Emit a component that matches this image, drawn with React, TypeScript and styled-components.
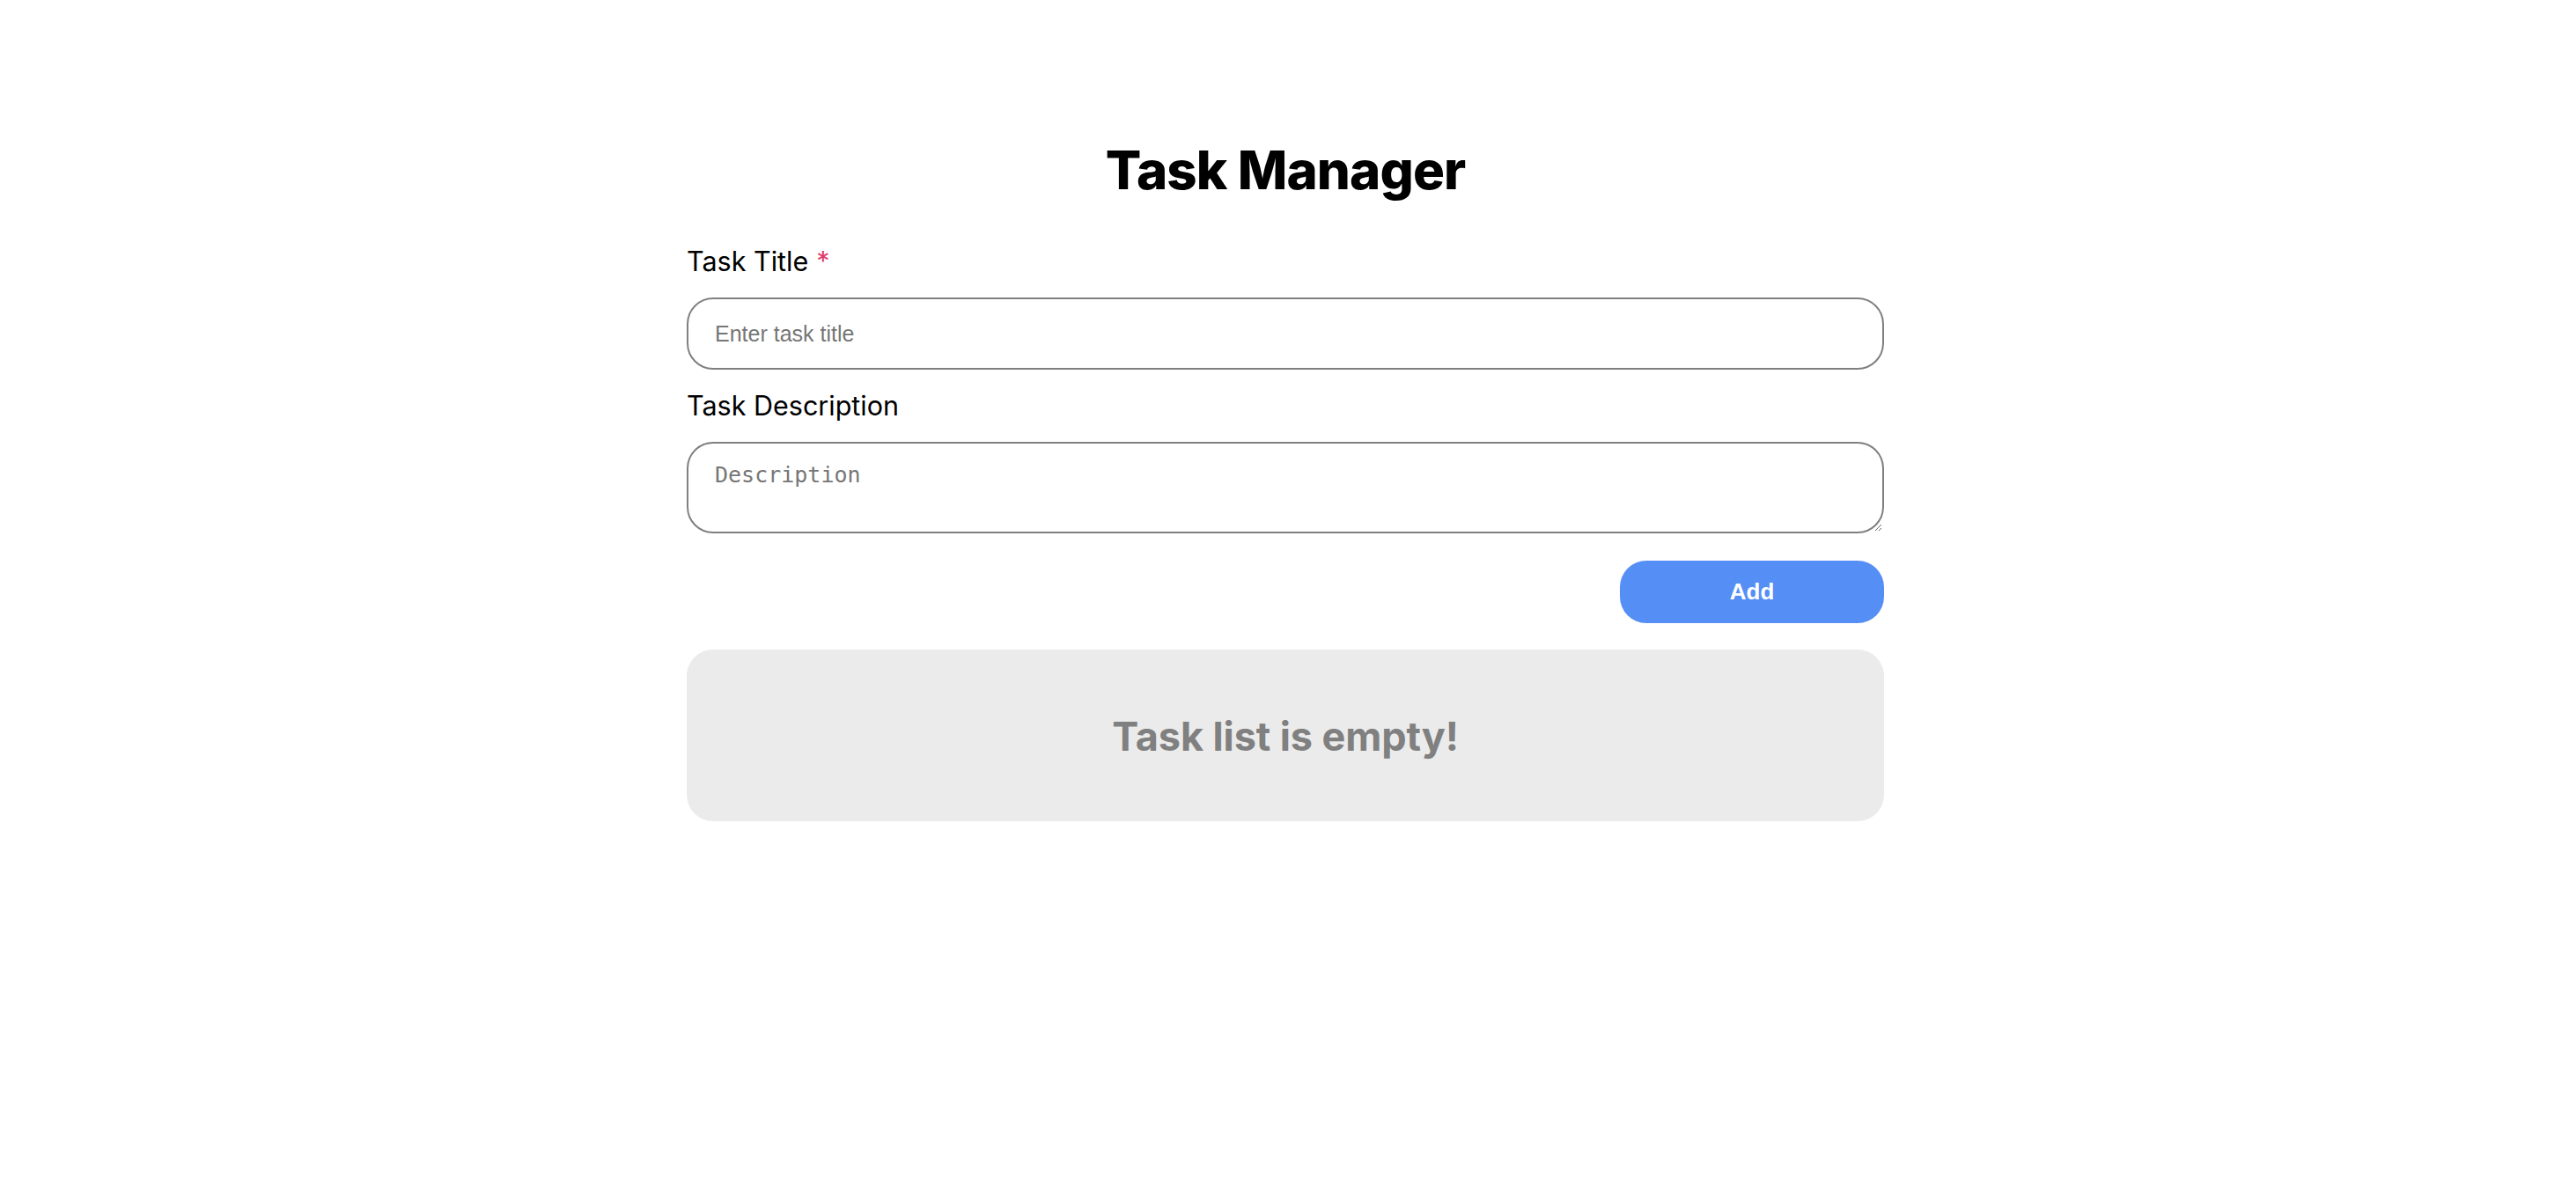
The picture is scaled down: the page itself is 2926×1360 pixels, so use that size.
import React from "react";
import styled, { createGlobalStyle } from "styled-components";

const GlobalStyle = createGlobalStyle`
  html, body {
    margin: 0;
    padding: 0;
    background: #ffffff;
  }
  body {
    font-family: Inter, "Noto Sans", sans-serif;
    color: #000000;
  }
  *, *::before, *::after { box-sizing: border-box; }
`;

const Page = styled.main`
  display: flex;
  justify-content: center;
  padding: 157px 6px 0 0;
`;

const Container = styled.div`
  width: 1360px;
  display: flex;
  flex-direction: column;
`;

const Title = styled.h1`
  margin: 0 0 50px;
  font-family: Inter, sans-serif;
  font-size: 60px;
  line-height: 72px;
  font-weight: 800;
  letter-spacing: -0.9px;
  text-align: center;
`;

const Label = styled.label`
  display: block;
  margin: 0 0 23px;
  font-family: Inter, sans-serif;
  font-size: 30.5px;
  line-height: 36px;
  font-weight: 400;
  color: #000000;
`;

const Required = styled.span`
  color: #df3a6a;
  margin-left: 9px;
`;

const fieldBase = `
  display: block;
  width: 100%;
  border: 2px solid #808080;
  border-radius: 30px;
  background: #ffffff;
  color: #000000;
  outline: none;
  margin: 0;
  &::placeholder { color: #767676; opacity: 1; }
`;

const TextInput = styled.input`
  ${fieldBase}
  height: 82px;
  padding: 0 30px;
  font-family: "Liberation Sans", Arial, sans-serif;
  font-size: 25px;
  margin-bottom: 23px;
`;

const TextArea = styled.textarea`
  ${fieldBase}
  height: 104px;
  padding: 21px 30px;
  font-family: "DejaVu Sans Mono", monospace;
  font-size: 25px;
  resize: vertical;
`;

const Actions = styled.div`
  display: flex;
  justify-content: flex-end;
  margin: 31px 0 30px;
`;

const AddButton = styled.button`
  width: 300px;
  height: 71px;
  border: none;
  border-radius: 30px;
  background: #558ef5;
  color: #ffffff;
  font-family: "Liberation Sans", Arial, sans-serif;
  font-weight: 700;
  font-size: 26px;
  cursor: pointer;
`;

const EmptyBox = styled.section`
  height: 195px;
  border-radius: 30px;
  background: #ebebeb;
  display: flex;
  align-items: center;
  justify-content: center;
  padding-top: 2px;
`;

const EmptyText = styled.h2`
  margin: 0;
  font-family: Inter, sans-serif;
  font-size: 45px;
  line-height: 54px;
  font-weight: 700;
  color: #808080;
  letter-spacing: -0.1px;
`;

export default function App() {
  return (
    <>
      <GlobalStyle />
      <Page>
        <Container>
          <Title>Task Manager</Title>
          <Label htmlFor="title">
            Task Title<Required>*</Required>
          </Label>
          <TextInput id="title" type="text" placeholder="Enter task title" />
          <Label htmlFor="desc">Task Description</Label>
          <TextArea id="desc" placeholder="Description" />
          <Actions>
            <AddButton type="button">Add</AddButton>
          </Actions>
          <EmptyBox>
            <EmptyText>Task list is empty!</EmptyText>
          </EmptyBox>
        </Container>
      </Page>
    </>
  );
}
